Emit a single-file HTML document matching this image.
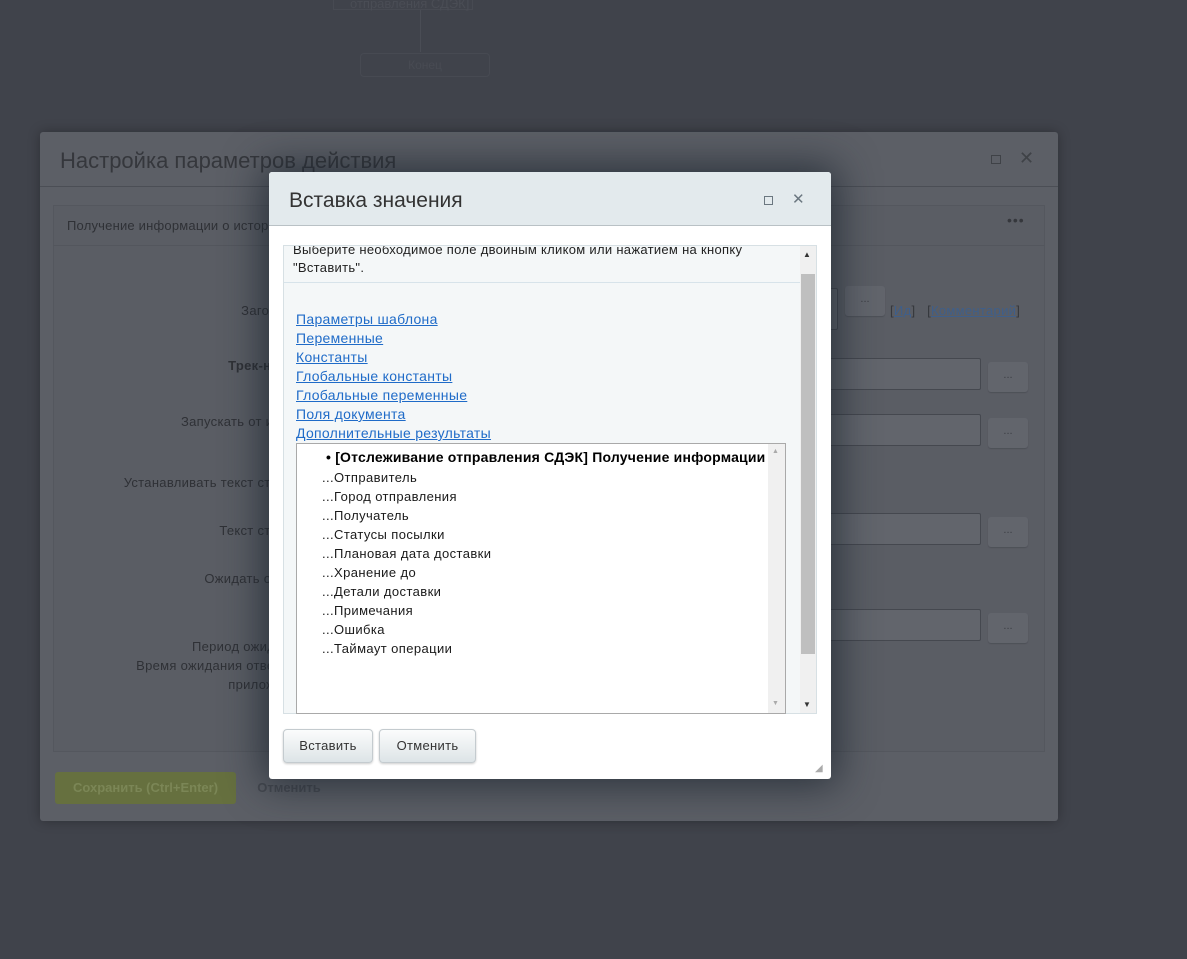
<!DOCTYPE html>
<html><head><meta charset="utf-8"><style>
*{margin:0;padding:0;box-sizing:border-box}
body{width:1187px;height:959px;overflow:hidden;background:#40434b;font-family:"Liberation Sans","DejaVu Sans",sans-serif;position:relative}
.a{position:absolute}
.lbl{position:absolute;right:0;color:#2f3136;font-size:13px;text-align:right;white-space:nowrap;letter-spacing:.3px}
.ta{position:absolute;border:1px solid #45484f;background:#62656c;border-radius:2px;height:32px}
.dots{position:absolute;width:40px;height:30px;border-radius:3px;background:#62656c;color:#3c3e44;font-size:11px;text-align:center;line-height:26px;box-shadow:0 1px 1px #4d5057}
.lk{position:absolute;left:296px;color:#1f6bc8;font-size:14px;letter-spacing:.3px;text-decoration:underline;white-space:nowrap}
.it{position:absolute;left:322px;font-size:13px;letter-spacing:.4px;color:#1a1a1a;white-space:nowrap}
.btn{position:absolute;top:729px;height:34px;border-radius:4px;border:1px solid #c4cbcf;background:linear-gradient(#fbfcfc,#dde4e7);font-size:13px;letter-spacing:.3px;color:#333;text-align:center;line-height:32px;box-shadow:0 1px 2px rgba(0,0,0,.2)}
</style></head><body>
<div class="a" style="left:333px;top:0;width:140px;height:10px;border:1px solid #474a52;border-top:none"></div>
<div class="a" style="left:350px;top:-4px;color:#4a4d55;font-size:13px">отправления СДЭК]</div>
<div class="a" style="left:420px;top:10px;width:1px;height:42px;background:#4a4d55"></div>
<div class="a" style="left:360px;top:53px;width:130px;height:24px;border:1px solid #474a52;border-radius:4px;color:#484b53;font-size:12px;text-align:center;line-height:22px">Конец</div>

<div class="a" style="left:40px;top:132px;width:1018px;height:689px;background:#5c5f66;border-radius:3px;box-shadow:0 0 12px rgba(0,0,0,.3)"></div>
<div class="a" style="left:40px;top:186px;width:1018px;height:1px;background:#4b4e55"></div>
<div class="a" style="left:60px;top:148px;font-size:22px;color:#35373c">Настройка параметров действия</div>
<div class="a" style="left:991px;top:155px;width:10px;height:9px;border:1.5px solid #3f4247"></div>
<div class="a" style="left:1019px;top:148px;font-size:18px;color:#3f4247">✕</div>
<div class="a" style="left:53px;top:205px;width:992px;height:547px;background:#5a5d64;border:1px solid #54575e"></div>
<div class="a" style="left:53px;top:245px;width:992px;height:1px;background:#53565d"></div>
<div class="a" style="left:67px;top:218px;font-size:13px;color:#2f3136;letter-spacing:.2px">Получение информации о истории</div>
<div class="a" style="left:1007px;top:212px;font-size:14px;color:#35373c;letter-spacing:1px">•••</div>
<div class="a" style="left:0;top:0;width:305px;height:959px">
<div class="lbl" style="top:303px">Заголовок</div>
<div class="lbl" style="top:358px;font-weight:bold">Трек-номер</div>
<div class="lbl" style="top:414px">Запускать от имени</div>
<div class="lbl" style="top:475px">Устанавливать текст статуса</div>
<div class="lbl" style="top:523px">Текст статуса</div>
<div class="lbl" style="top:571px">Ожидать ответа</div>
<div class="lbl" style="top:639px">Период ожидания</div>
<div class="lbl" style="top:658px">Время ожидания ответа от</div>
<div class="lbl" style="top:677px">приложения</div>
</div>
<div class="ta" style="left:780px;top:288px;width:58px;height:42px"></div>
<div class="dots" style="left:845px;top:286px">...</div>
<div class="a" style="left:890px;top:303px;font-size:13px;color:#35373c;letter-spacing:.3px">[<u style="color:#3f5f8a">Ид</u>]&nbsp;&nbsp; [<u style="color:#3f5f8a">Комментарий</u>]</div>
<div class="ta" style="left:780px;top:358px;width:201px"></div><div class="dots" style="left:988px;top:362px">...</div>
<div class="ta" style="left:780px;top:414px;width:201px"></div><div class="dots" style="left:988px;top:418px">...</div>
<div class="ta" style="left:780px;top:513px;width:201px"></div><div class="dots" style="left:988px;top:517px">...</div>
<div class="ta" style="left:780px;top:609px;width:201px"></div><div class="dots" style="left:988px;top:613px">...</div>
<div class="a" style="left:55px;top:772px;width:181px;height:32px;background:#66703f;border-radius:3px;color:#7b8656;font-size:13px;font-weight:bold;text-align:center;line-height:32px">Сохранить (Ctrl+Enter)</div>
<div class="a" style="left:242px;top:772px;width:94px;height:32px;border-radius:3px;color:#464950;font-size:13px;font-weight:bold;text-align:center;line-height:32px">Отменить</div>

<div class="a" style="left:269px;top:172px;width:562px;height:607px;background:#fff;border-radius:3px;box-shadow:0 0 40px 6px rgba(25,35,45,.75)"></div>
<div class="a" style="left:269px;top:172px;width:562px;height:54px;background:#e3eaed;border-bottom:1px solid #b9c1c5;border-radius:3px 3px 0 0"></div>
<div class="a" style="left:289px;top:189px;font-size:21px;color:#333">Вставка значения</div>
<div class="a" style="left:764px;top:196px;width:9px;height:9px;border:1.5px solid #6b7780"></div>
<div class="a" style="left:792px;top:190px;font-size:15px;font-weight:bold;color:#6b7780">✕</div>
<div class="a" style="left:283px;top:245px;width:534px;height:469px;background:#f4f7f8;border:1px solid #d7e0e4;overflow:hidden">
 <div class="a" style="left:9px;top:-5px;font-size:13px;color:#222;line-height:18px;width:510px;letter-spacing:.3px">Выберите необходимое поле двоиным кликом или нажатием на кнопку<br>"Вставить".</div>
 <div class="a" style="left:0;top:36px;width:516px;height:1px;background:#d7e3ea"></div>
 <div class="a" style="left:516px;top:0;width:17px;height:468px;background:#f0f0f0"></div>
 <div class="a" style="left:517px;top:28px;width:14px;height:380px;background:#bfbfbf"></div>
 <div class="a" style="left:519px;top:4px;font-size:8px;color:#333">▲</div>
 <div class="a" style="left:519px;top:454px;font-size:8px;color:#333">▼</div>
</div>
<div class="lk" style="top:311px">Параметры шаблона</div>
<div class="lk" style="top:330px">Переменные</div>
<div class="lk" style="top:349px">Константы</div>
<div class="lk" style="top:368px">Глобальные константы</div>
<div class="lk" style="top:387px">Глобальные переменные</div>
<div class="lk" style="top:406px">Поля документа</div>
<div class="lk" style="top:425px">Дополнительные результаты</div>
<div class="a" style="left:296px;top:443px;width:490px;height:271px;background:#fff;border:1px solid #a9a9a9"></div>
<div class="a" style="left:768px;top:444px;width:17px;height:269px;background:#f0f0f0"></div>
<div class="a" style="left:772px;top:448px;font-size:7px;color:#aaa">▲</div>
<div class="a" style="left:772px;top:700px;font-size:7px;color:#aaa">▼</div>
<div class="it" style="left:326px;top:449px;font-weight:bold;color:#000;font-size:14px;letter-spacing:.2px">• [Отслеживание отправления СДЭК] Получение информации</div>
<div class="it" style="top:470px">...Отправитель</div>
<div class="it" style="top:489px">...Город отправления</div>
<div class="it" style="top:508px">...Получатель</div>
<div class="it" style="top:527px">...Статусы посылки</div>
<div class="it" style="top:546px">...Плановая дата доставки</div>
<div class="it" style="top:565px">...Хранение до</div>
<div class="it" style="top:584px">...Детали доставки</div>
<div class="it" style="top:603px">...Примечания</div>
<div class="it" style="top:622px">...Ошибка</div>
<div class="it" style="top:641px">...Таймаут операции</div>
<div class="btn" style="left:283px;width:90px">Вставить</div>
<div class="btn" style="left:379px;width:97px">Отменить</div>
<div class="a" style="left:815px;top:763px;font-size:10px;color:#aaa">◢</div>
</body></html>
